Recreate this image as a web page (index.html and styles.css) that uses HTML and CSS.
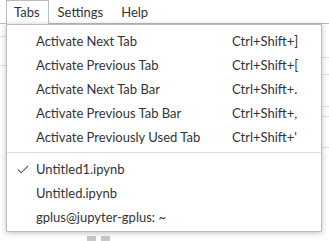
FILE: index.html
```html
<!DOCTYPE html>
<html lang="en">
<head>
    <meta charset="UTF-8">
    <title>Tabs menu</title>
    <link rel="stylesheet" href="styles.css">
</head>
<body>
    <div class="app">
        <div class="menubar">
            <div class="menubar-item active">Tabs</div>
            <div class="menubar-item">Settings</div>
            <div class="menubar-item">Help</div>
        </div>
        <div class="workspace">
            <div class="side">
                <div class="row r1"></div>
                <div class="row r2"></div>
            </div>
            <div class="main">
                <div class="row r3"></div>
                <div class="row r4"></div>
                <div class="row r5"></div>
                <div class="row r6"></div>
                <div class="row r7"></div>
            </div>
        </div>
        <div class="scroll-bits">
            <span></span><span></span>
        </div>

        <!-- dropdown for the active menubar item -->
        <div class="menu">
            <div class="item"><span class="icon"></span><span class="label">Activate Next Tab</span><span class="shortcut">Ctrl+Shift+]</span></div>
            <div class="item"><span class="icon"></span><span class="label">Activate Previous Tab</span><span class="shortcut">Ctrl+Shift+[</span></div>
            <div class="item"><span class="icon"></span><span class="label">Activate Next Tab Bar</span><span class="shortcut">Ctrl+Shift+.</span></div>
            <div class="item"><span class="icon"></span><span class="label">Activate Previous Tab Bar</span><span class="shortcut">Ctrl+Shift+,</span></div>
            <div class="item"><span class="icon"></span><span class="label">Activate Previously Used Tab</span><span class="shortcut">Ctrl+Shift+'</span></div>
            <div class="separator"></div>
            <div class="item">
                <span class="icon">
                    <svg width="12" height="9" viewBox="0 0 12 9"><path d="M1 4.5 L4.2 7.8 L11 1" fill="none" stroke="#616161" stroke-width="1.1"/></svg>
                </span>
                <span class="label">Untitled1.ipynb</span><span class="shortcut"></span>
            </div>
            <div class="item"><span class="icon"></span><span class="label">Untitled.ipynb</span><span class="shortcut"></span></div>
            <div class="item"><span class="icon"></span><span class="label">gplus@jupyter-gplus: ~</span><span class="shortcut"></span></div>
        </div>
    </div>
</body>
</html>
```

FILE: styles.css
```css
body {
    margin: 0;
    background-color: #fff;
    font-family: Lato, "Liberation Sans", sans-serif;
    font-size: 13px;
    color: #333;
}
.app {
    position: relative;
    width: 329px;
    height: 241px;
    overflow: hidden;
}
.menubar {
    display: flex;
    height: 24px;
    padding-left: 6px;
    border-bottom: 1px solid #bdbdbd;
    box-sizing: border-box;
}
.menubar-item {
    padding: 0 8px 0 7px;
    margin-right: 1px;
    line-height: 23px;
    border: 1px solid transparent;
    border-bottom: none;
}
.menubar-item.active {
    background-color: #fff;
    border-color: #bdbdbd;
    height: 24px;
}
.workspace {
    display: flex;
    height: 206px;
}
.side {
    width: 60px;
    border-right: 1px solid #e0e0e0;
}
.main {
    flex: 1;
}
.row {
    border-bottom: 1px solid #e0e0e0;
}
.r1 { height: 12px; }
.r2 { height: 28px; }
.r3 { height: 33px; }
.r4 { height: 16px; }
.r5 { height: 31px; }
.r6 { height: 9px; }
.r7 { height: 30px; }
.scroll-bits {
    display: flex;
    gap: 5px;
    padding: 6px 0 0 87px;
}
.scroll-bits span {
    width: 9px;
    height: 6px;
    background-color: #c8c8c8;
}
.menu {
    position: absolute;
    left: 6px;
    top: 24px;
    width: 316px;
    box-sizing: border-box;
    padding: 4px 0 2px;
    background-color: #fff;
    border: 1px solid #bdbdbd;
    box-shadow: 0 1px 6px rgba(0, 0, 0, 0.25);
}
.item {
    display: grid;
    grid-template-columns: 29px 196px 1fr;
    align-items: center;
    height: 24px;
    color: #333;
}
.icon {
    display: flex;
    justify-content: center;
    align-items: center;
    padding-left: 2px;
}
.label {
    white-space: nowrap;
}
.shortcut {
    white-space: nowrap;
}
.separator {
    height: 1px;
    margin: 3px 0 4px;
    background-color: #e0e0e0;
}
```
